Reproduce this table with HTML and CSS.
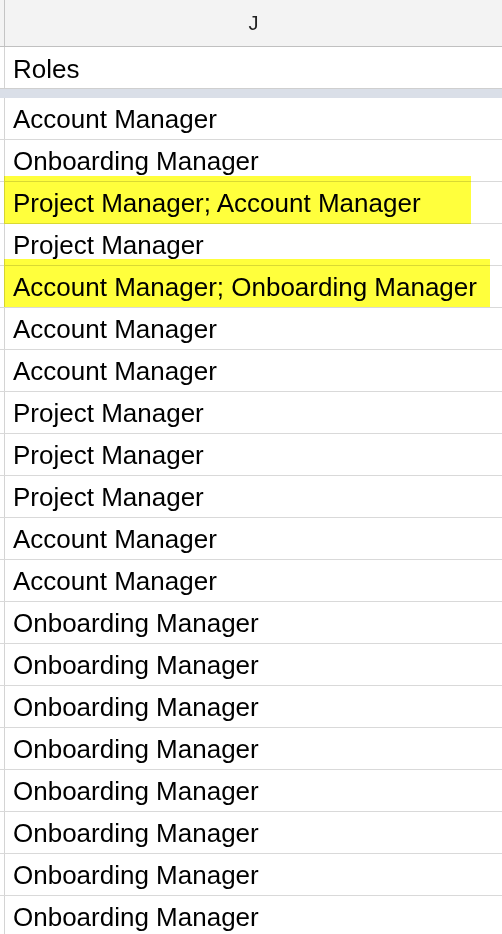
FILE: index.html
```html
<!DOCTYPE html>
<html>
<head>
<meta charset="utf-8">
<link rel="stylesheet" href="styles.css">
</head>
<body>
<div class="sheet">
  <div class="row header">
    <div class="gutter"></div>
    <div class="cell colhead">J</div>
  </div>
  <div class="row frozen">
    <div class="gutter"></div>
    <div class="cell">Roles</div>
  </div>
  <div class="freeze-bar"></div>
  <div class="row"><div class="gutter"></div><div class="cell">Account Manager</div></div>
  <div class="row"><div class="gutter"></div><div class="cell">Onboarding Manager</div></div>
  <div class="row"><div class="gutter"></div><div class="cell">Project Manager; Account Manager</div></div>
  <div class="row"><div class="gutter"></div><div class="cell">Project Manager</div></div>
  <div class="row"><div class="gutter"></div><div class="cell">Account Manager; Onboarding Manager</div></div>
  <div class="row"><div class="gutter"></div><div class="cell">Account Manager</div></div>
  <div class="row"><div class="gutter"></div><div class="cell">Account Manager</div></div>
  <div class="row"><div class="gutter"></div><div class="cell">Project Manager</div></div>
  <div class="row"><div class="gutter"></div><div class="cell">Project Manager</div></div>
  <div class="row"><div class="gutter"></div><div class="cell">Project Manager</div></div>
  <div class="row"><div class="gutter"></div><div class="cell">Account Manager</div></div>
  <div class="row"><div class="gutter"></div><div class="cell">Account Manager</div></div>
  <div class="row"><div class="gutter"></div><div class="cell">Onboarding Manager</div></div>
  <div class="row"><div class="gutter"></div><div class="cell">Onboarding Manager</div></div>
  <div class="row"><div class="gutter"></div><div class="cell">Onboarding Manager</div></div>
  <div class="row"><div class="gutter"></div><div class="cell">Onboarding Manager</div></div>
  <div class="row"><div class="gutter"></div><div class="cell">Onboarding Manager</div></div>
  <div class="row"><div class="gutter"></div><div class="cell">Onboarding Manager</div></div>
  <div class="row"><div class="gutter"></div><div class="cell">Onboarding Manager</div></div>
  <div class="row"><div class="gutter"></div><div class="cell">Onboarding Manager</div></div>

  <div class="mark mark-1"></div>
  <div class="mark mark-2"></div>
</div>
</body>
</html>
```

FILE: styles.css
```css
html, body {
  margin: 0;
  padding: 0;
  background: #ffffff;
  overflow: hidden;
}

.sheet {
  position: relative;
  width: 502px;
  height: 934px;
  overflow: hidden;
  font-family: "Liberation Sans", Arial, sans-serif;
  color: #000000;
}

.row {
  display: flex;
  height: 41px;
  border-bottom: 1px solid #d9d9d9;
}

.gutter {
  width: 4px;
  flex: none;
  border-right: 1px solid #d4d4d4;
}

.cell {
  flex: 1;
  padding-left: 8px;
  padding-top: 2px;
  font-size: 26px;
  line-height: 39px;
  white-space: nowrap;
}

.header {
  height: 46px;
  background: #f3f3f3;
  border-bottom: 1px solid #c0c0c0;
}

.header .gutter {
  border-right-color: #c4c4c4;
}

.colhead {
  padding-left: 0;
  padding-top: 1px;
  text-align: center;
  font-size: 20px;
  line-height: 45px;
  color: #222222;
}

.frozen .cell {
  padding-top: 3px;
  line-height: 38px;
}

.frozen {
  border-bottom: 1px solid #cfcfcf;
}

.freeze-bar {
  height: 9px;
  background: #dadfe8;
}

.mark {
  position: absolute;
  left: 4px;
  height: 48px;
  background: #ffff3c;
  mix-blend-mode: multiply;
}

.mark-1 {
  top: 176px;
  width: 467px;
}

.mark-2 {
  top: 259px;
  width: 486px;
}
```
